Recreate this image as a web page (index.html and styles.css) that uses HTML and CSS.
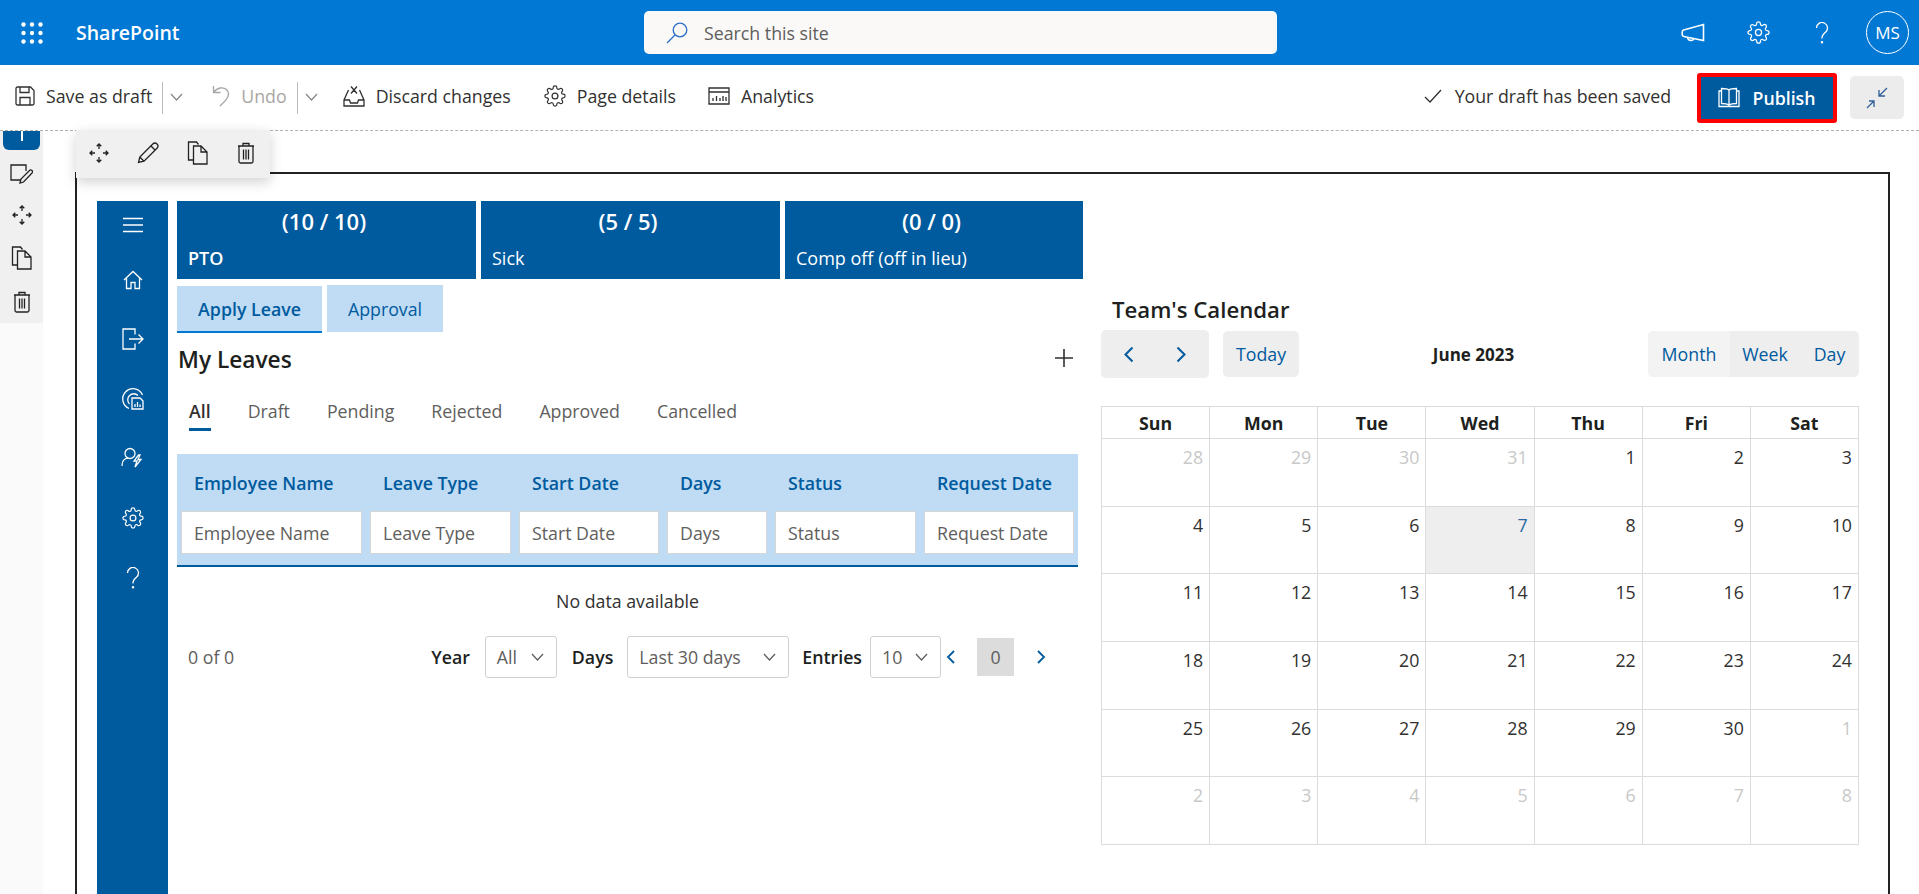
FILE: index.html
```html
<!DOCTYPE html>
<html lang="en">
<head>
    <meta charset="UTF-8">
    <title>SharePoint</title>
    <link rel="stylesheet" href="styles.css">
</head>
<body>
    <svg class="sprite" aria-hidden="true">
        <symbol id="i-gear" viewBox="0 0 24 24">
            <circle cx="12" cy="12" r="3.2"></circle>
            <path d="M19.4 15a1.65 1.65 0 0 0 .33 1.82l.06.06a2 2 0 0 1 0 2.83 2 2 0 0 1-2.83 0l-.06-.06a1.65 1.65 0 0 0-1.82-.33 1.65 1.65 0 0 0-1 1.51V21a2 2 0 0 1-2 2 2 2 0 0 1-2-2v-.09A1.65 1.65 0 0 0 9 19.4a1.65 1.65 0 0 0-1.82.33l-.06.06a2 2 0 0 1-2.83 0 2 2 0 0 1 0-2.83l.06-.06a1.65 1.65 0 0 0 .33-1.82 1.65 1.65 0 0 0-1.51-1H3a2 2 0 0 1-2-2 2 2 0 0 1 2-2h.09A1.65 1.65 0 0 0 4.6 9a1.65 1.65 0 0 0-.33-1.82l-.06-.06a2 2 0 0 1 0-2.83 2 2 0 0 1 2.83 0l.06.06a1.65 1.65 0 0 0 1.82.33H9a1.65 1.65 0 0 0 1-1.51V3a2 2 0 0 1 2-2 2 2 0 0 1 2 2v.09a1.65 1.65 0 0 0 1 1.51 1.65 1.65 0 0 0 1.82-.33l.06-.06a2 2 0 0 1 2.83 0 2 2 0 0 1 0 2.83l-.06.06a1.65 1.65 0 0 0-.33 1.82V9a1.65 1.65 0 0 0 1.51 1H21a2 2 0 0 1 2 2 2 2 0 0 1-2 2h-.09a1.65 1.65 0 0 0-1.51 1z"></path>
        </symbol>
        <symbol id="i-move" viewBox="0 0 20 20">
            <path d="M10 1v5M7.7 3.3 10 1l2.3 2.3M10 19v-5M7.7 16.700 10 19l2.300-2.300M1 10h5M3.300 7.700 1 10l2.300 2.300M19 10h-5M16.700 7.700 19 10l-2.300 2.300"></path>
        </symbol>
        <symbol id="i-pencil" viewBox="0 0 22 22">
            <path d="M1.500 20.500l1.300-5.500L15.800 2a2.400 2.400 0 0 1 4.200 4.200L7 19.200zM2.800 15l4.200 4.200M14 4l4 4"></path>
        </symbol>
        <symbol id="i-copy" viewBox="0 0 22 24">
            <path d="M6.500 19H1.500V1h8l2 2.500M6.500 5h7.500l6 6v12H6.500zM14 5v6h6"></path>
        </symbol>
        <symbol id="i-trash" viewBox="0 0 18 22">
            <path d="M1 4h16M6 4V1.500h6V4M2 4v15.500A1.500 1.500 0 0 0 3.500 21h11a1.500 1.500 0 0 0 1.500-1.500V4M6.500 7.500v10M9 7.500v10M11.500 7.500v10"></path>
        </symbol>
        <symbol id="i-question" viewBox="0 0 14 22">
            <path d="M1.500 6a5.500 5.500 0 1 1 9 4.200C8.500 12 7 13 7 15.500v1"></path>
            <circle cx="7" cy="20.300" r=".6"></circle>
        </symbol>
    </svg>

    <!-- suite bar -->
    <header class="suite-bar">
        <svg class="waffle" width="22" height="22" viewBox="0 0 22 22">
            <circle cx="2.500" cy="2.500" r="2.200"></circle><circle cx="11" cy="2.500" r="2.200"></circle><circle cx="19.500" cy="2.500" r="2.200"></circle>
            <circle cx="2.500" cy="11" r="2.200"></circle><circle cx="11" cy="11" r="2.200"></circle><circle cx="19.500" cy="11" r="2.200"></circle>
            <circle cx="2.500" cy="19.500" r="2.200"></circle><circle cx="11" cy="19.500" r="2.200"></circle><circle cx="19.500" cy="19.500" r="2.200"></circle>
        </svg>
        <span class="brand">SharePoint</span>
        <div class="search-box">
            <svg class="ic search-icon" width="22" height="22" viewBox="0 0 22 22">
                <circle cx="14" cy="8" r="6.800"></circle>
                <path d="M9 13 1 21"></path>
            </svg>
            <span>Search this site</span>
        </div>
        <div class="suite-actions">
            <svg class="ic megaphone" width="24" height="20" viewBox="0 0 24 20">
                <path d="M22.500 1.500v16L2.800 13.500A2 2 0 0 1 1.200 11.500V9a2 2 0 0 1 1.400-1.900zM6.500 14.500a3.500 3.500 0 0 0 6.500 1.200"></path>
            </svg>
            <svg class="ic" width="23" height="23"><use href="#i-gear"></use></svg>
            <svg class="ic help-icon" width="14" height="22"><use href="#i-question"></use></svg>
            <div class="avatar">MS</div>
        </div>
    </header>

    <!-- command bar -->
    <div class="command-bar">
        <button class="cmd">
            <svg class="ic" width="20" height="20" viewBox="0 0 20 20">
                <path d="M1 2.500A1.500 1.500 0 0 1 2.500 1h13L19 4.500v13a1.500 1.500 0 0 1-1.500 1.500h-15A1.500 1.500 0 0 1 1 17.500zM5 1v5.500h9V1M5 19v-7.500h10V19"></path>
            </svg>
            Save as draft
        </button>
        <span class="cmd-split"></span>
        <svg class="ic chev" width="13" height="8" viewBox="0 0 13 8"><path d="M1 1l5.500 6L12 1"></path></svg>

        <button class="cmd cmd-disabled cmd-undo">
            <svg class="ic" width="18" height="22" viewBox="0 0 18 22">
                <path d="M1.500 1v6.500h7M1.500 7.500C5 2.500 11 1.500 14.500 4.500c3.500 3.500 2.500 7-1 11L8 21"></path>
            </svg>
            Undo
        </button>
        <span class="cmd-split"></span>
        <svg class="ic chev" width="13" height="8" viewBox="0 0 13 8"><path d="M1 1l5.500 6L12 1"></path></svg>

        <button class="cmd cmd-discard">
            <svg class="ic" width="22" height="22" viewBox="0 0 22 22">
                <path d="M5.500 5 1 15v6h20v-6L16.500 5M1 15h5.500l1 3h7l1-3H21M8 1.500l6 7M14 1.500l-6 7"></path>
            </svg>
            Discard changes
        </button>
        <button class="cmd cmd-details">
            <svg class="ic" width="22" height="22"><use href="#i-gear"></use></svg>
            Page details
        </button>
        <button class="cmd cmd-analytics">
            <svg class="ic" width="22" height="18" viewBox="0 0 22 18">
                <path d="M1 1h20v16H1zM1 5h20M5 14v-3M8.500 14V9M12 14v-3M15 14V9M18 14v-4"></path>
            </svg>
            Analytics
        </button>

        <div class="save-state">
            <svg class="ic" width="18" height="14" viewBox="0 0 18 14"><path d="M1 8l5 5L17 1"></path></svg>
            Your draft has been saved
        </div>
        <button class="publish-btn">
            <svg class="ic" width="22" height="21" viewBox="0 0 22 21">
                <path d="M3.500 1.500c3 0 6 0 7.500 1.500v15c-1.500-1-4.500-1.500-7.500-1.500zM18.500 1.500c-3 0-6 0-7.500 1.500v15c1.500-1 4.500-1.500 7.500-1.500zM3.500 4H1v15.500h20V4h-2.500"></path>
            </svg>
            Publish
        </button>
        <button class="collapse-btn">
            <svg class="ic" width="22" height="22" viewBox="0 0 22 22">
                <path d="M21 1l-8 8M13 3v6h6M1 21l7-7M3 14h5v6"></path>
            </svg>
        </button>
    </div>

    <div class="workspace">
        <!-- left edit rail -->
        <aside class="rail">
            <div class="rail-tools">
                <div class="rail-add"></div>
                <svg class="ic" width="23" height="20" viewBox="0 0 23 20">
                    <path d="M11 16H1V1h15v6M10 19l1-4 8.500-8.500a1.700 1.700 0 0 1 2.500 2.500L13.500 18z"></path>
                </svg>
                <svg class="ic" width="20" height="20"><use href="#i-move"></use></svg>
                <svg class="ic" width="22" height="24"><use href="#i-copy"></use></svg>
                <svg class="ic" width="18" height="22"><use href="#i-trash"></use></svg>
            </div>
        </aside>

        <!-- floating webpart toolbar -->
        <div class="part-tools">
            <svg class="ic" width="20" height="20"><use href="#i-move"></use></svg>
            <svg class="ic" width="22" height="22"><use href="#i-pencil"></use></svg>
            <svg class="ic" width="22" height="24"><use href="#i-copy"></use></svg>
            <svg class="ic" width="18" height="22"><use href="#i-trash"></use></svg>
        </div>

        <section class="webpart">
            <nav class="side-nav">
                <svg class="ic" width="20" height="16" viewBox="0 0 20 16"><path d="M0 1.500h20M0 8h20M0 14.500h20"></path></svg>
                <svg class="ic" width="20" height="20" viewBox="0 0 20 20">
                    <path d="M1 10 10 1.500 19 10M3.500 8v10.500h4.500v-6h4v6h4.500V8"></path>
                </svg>
                <svg class="ic" width="22" height="22" viewBox="0 0 22 22">
                    <path d="M13 6.500V1H1v20h12v-5.500M7 11h14M16.500 6.500 21 11l-4.500 4.500"></path>
                </svg>
                <svg class="ic" width="23" height="23" viewBox="0 0 23 23">
                    <path d="M8 21.500A10.300 10.300 0 1 1 21.500 8M8.500 17A6 6 0 1 1 17 8.500"></path>
                    <path d="M11 11h8l3 3v8H11zM14 20v-3M16.500 20v-5M19 20v-2.500"></path>
                </svg>
                <svg class="ic" width="23" height="22" viewBox="0 0 23 22">
                    <circle cx="9" cy="6.500" r="5"></circle>
                    <path d="M1 19c0-4.500 2.500-7.500 6-7.800M17.500 8l-4.500 6h3l-2 6 6-7.500h-3l2-4.500z"></path>
                </svg>
                <svg class="ic" width="22" height="22"><use href="#i-gear"></use></svg>
                <svg class="ic" width="14" height="22"><use href="#i-question"></use></svg>
            </nav>

            <div class="leave-col">
                <div class="balance-cards">
                    <div class="balance-card">
                        <div class="balance-count">(10 / 10)</div>
                        <div class="balance-label balance-strong">PTO</div>
                    </div>
                    <div class="balance-card">
                        <div class="balance-count">(5 / 5)</div>
                        <div class="balance-label">Sick</div>
                    </div>
                    <div class="balance-card">
                        <div class="balance-count">(0 / 0)</div>
                        <div class="balance-label">Comp off (off in lieu)</div>
                    </div>
                </div>

                <div class="main-tabs">
                    <div class="main-tab main-tab-active">Apply Leave</div>
                    <div class="main-tab">Approval</div>
                </div>

                <div class="leaves-head">
                    <h2>My Leaves</h2>
                    <svg class="ic add-icon" width="18" height="18" viewBox="0 0 18 18"><path d="M9 0v18M0 9h18"></path></svg>
                </div>

                <div class="status-tabs">
                    <span class="status-tab status-tab-active">All</span>
                    <span class="status-tab">Draft</span>
                    <span class="status-tab">Pending</span>
                    <span class="status-tab">Rejected</span>
                    <span class="status-tab">Approved</span>
                    <span class="status-tab">Cancelled</span>
                </div>

                <div class="leave-table">
                    <div class="leave-th">Employee Name</div>
                    <div class="leave-th">Leave Type</div>
                    <div class="leave-th">Start Date</div>
                    <div class="leave-th">Days</div>
                    <div class="leave-th">Status</div>
                    <div class="leave-th">Request Date</div>
                    <input class="leave-filter" placeholder="Employee Name">
                    <input class="leave-filter" placeholder="Leave Type">
                    <input class="leave-filter" placeholder="Start Date">
                    <input class="leave-filter" placeholder="Days">
                    <input class="leave-filter" placeholder="Status">
                    <input class="leave-filter" placeholder="Request Date">
                </div>
                <div class="no-data">No data available</div>

                <div class="table-foot">
                    <span class="foot-count">0 of 0</span>
                    <div class="foot-controls">
                        <label>Year</label>
                        <div class="fake-select select-year">All<svg class="ic" width="13" height="8" viewBox="0 0 13 8"><path d="M1 1l5.500 6L12 1"></path></svg></div>
                        <label class="label-days">Days</label>
                        <div class="fake-select select-days">Last 30 days<svg class="ic" width="13" height="8" viewBox="0 0 13 8"><path d="M1 1l5.500 6L12 1"></path></svg></div>
                        <label class="label-entries">Entries</label>
                        <div class="fake-select select-entries">10<svg class="ic" width="13" height="8" viewBox="0 0 13 8"><path d="M1 1l5.500 6L12 1"></path></svg></div>
                        <svg class="ic pager-chev" width="9" height="14" viewBox="0 0 9 14"><path d="M8 1 2 7l6 6"></path></svg>
                        <span class="pager-box">0</span>
                        <svg class="ic pager-chev" width="9" height="14" viewBox="0 0 9 14"><path d="M1 1l6 6-6 6"></path></svg>
                    </div>
                </div>
            </div>

            <div class="calendar-col">
                <h2 class="cal-title">Team's Calendar</h2>
                <div class="cal-toolbar">
                    <div class="cal-left">
                        <div class="cal-nav">
                            <svg class="ic" width="11" height="17" viewBox="0 0 11 17"><path d="M9.500 1.500 2.500 8.500l7 7"></path></svg>
                            <svg class="ic" width="11" height="17" viewBox="0 0 11 17"><path d="M1.500 1.500l7 7-7 7"></path></svg>
                        </div>
                        <div class="cal-today">Today</div>
                    </div>
                    <div class="cal-month">June 2023</div>
                    <div class="cal-views">
                        <span class="cal-view cal-view-on">Month</span>
                        <span class="cal-view cal-view-week">Week</span>
                        <span class="cal-view cal-view-day">Day</span>
                    </div>
                </div>

                <div class="cal-grid">
                    <div class="cal-dow">Sun</div><div class="cal-dow">Mon</div><div class="cal-dow">Tue</div><div class="cal-dow">Wed</div><div class="cal-dow">Thu</div><div class="cal-dow">Fri</div><div class="cal-dow">Sat</div>
                    <div class="cal-day cal-off">28</div><div class="cal-day cal-off">29</div><div class="cal-day cal-off">30</div><div class="cal-day cal-off">31</div><div class="cal-day">1</div><div class="cal-day">2</div><div class="cal-day">3</div>
                    <div class="cal-day">4</div><div class="cal-day">5</div><div class="cal-day">6</div><div class="cal-day cal-now">7</div><div class="cal-day">8</div><div class="cal-day">9</div><div class="cal-day">10</div>
                    <div class="cal-day">11</div><div class="cal-day">12</div><div class="cal-day">13</div><div class="cal-day">14</div><div class="cal-day">15</div><div class="cal-day">16</div><div class="cal-day">17</div>
                    <div class="cal-day">18</div><div class="cal-day">19</div><div class="cal-day">20</div><div class="cal-day">21</div><div class="cal-day">22</div><div class="cal-day">23</div><div class="cal-day">24</div>
                    <div class="cal-day">25</div><div class="cal-day">26</div><div class="cal-day">27</div><div class="cal-day">28</div><div class="cal-day">29</div><div class="cal-day">30</div><div class="cal-day cal-off">1</div>
                    <div class="cal-day cal-off">2</div><div class="cal-day cal-off">3</div><div class="cal-day cal-off">4</div><div class="cal-day cal-off">5</div><div class="cal-day cal-off">6</div><div class="cal-day cal-off">7</div><div class="cal-day cal-off">8</div>
                </div>
            </div>
        </section>
    </div>
</body>
</html>
```
FILE: styles.css
```css
:root {
    --suite-blue: #0078d4;
    --theme-blue: #005a9e;
    --light-blue: #bfdcf4;
    --text-dark: #323130;
    --text-muted: #605e5c;
    --line: #dcdcdc;
}

*, *::before, *::after {
    box-sizing: border-box;
    margin: 0;
    padding: 0;
}

html, body {
    height: 894px;
    overflow: hidden;
}

body {
    font-family: "Open Sans", "Noto Sans", sans-serif;
    font-size: 17.75px;
    color: var(--text-dark);
    background: #fff;
    display: flex;
    flex-direction: column;
}

button {
    font: inherit;
    color: inherit;
    background: none;
    border: 0;
}

.sprite {
    display: none;
}

.ic {
    fill: none;
    stroke: currentColor;
    stroke-width: 1.3;
    flex-shrink: 0;
    display: block;
}

/* suite bar */
.suite-bar {
    height: 65px;
    flex-shrink: 0;
    background: var(--suite-blue);
    color: #fff;
    display: flex;
    align-items: center;
    position: relative;
    padding-left: 21px;
}

.waffle {
    fill: #fff;
    margin-right: 33px;
}

.brand {
    font-size: 19.5px;
    font-weight: 600;
    width: 568px;
}

.search-box {
    width: 633px;
    height: 43px;
    background: #faf9f8;
    border-radius: 5px;
    color: var(--text-muted);
    display: flex;
    align-items: center;
    gap: 16px;
    padding-left: 22px;
}

.search-icon {
    color: #2a6fc4;
}

.suite-actions {
    margin-left: auto;
    display: flex;
    align-items: center;
    padding-right: 10px;
    gap: 42px;
}

.megaphone {
    stroke-width: 1.6;
}

.help-icon {
    margin-left: 3px;
}

.avatar {
    width: 43px;
    height: 43px;
    border: 1px solid #fff;
    border-radius: 50%;
    display: flex;
    align-items: center;
    justify-content: center;
    font-size: 17px;
    margin-left: -5px;
}

/* command bar */
.command-bar {
    height: 66px;
    flex-shrink: 0;
    display: flex;
    align-items: center;
    padding: 0 15px;
    border-bottom: 1px dashed #b0b0b0;
}

.cmd {
    display: flex;
    align-items: center;
    gap: 11px;
    white-space: nowrap;
    margin-bottom: 4px;
}

.cmd-disabled {
    color: #a8a6a4;
}

.cmd-split {
    width: 1px;
    height: 32px;
    background: #bdbdbd;
    margin: 0 7px 0 10px;
}

.chev {
    color: #8a8886;
    margin-bottom: 2px;
}

.cmd-undo {
    margin-left: 29px;
}

.cmd-discard {
    margin-left: 25px;
}

.cmd-details {
    margin-left: 33px;
}

.cmd-analytics {
    margin-left: 32px;
}

.save-state {
    margin-left: auto;
    margin-bottom: 4px;
    display: flex;
    align-items: center;
    gap: 13px;
}

.publish-btn {
    margin-left: 26px;
    width: 140px;
    height: 50px;
    background: var(--theme-blue);
    border: 4px solid #f00;
    border-radius: 3px;
    color: #fff;
    font-weight: 600;
    display: flex;
    align-items: center;
    justify-content: center;
    gap: 12px;
}

.collapse-btn {
    margin-left: 13px;
    width: 54px;
    height: 43px;
    background: #ececec;
    border-radius: 5px;
    color: #2f5f96;
    display: flex;
    align-items: center;
    justify-content: center;
}

/* page area */
.workspace {
    flex: 1;
    display: flex;
    position: relative;
    min-height: 0;
}

.rail {
    width: 43px;
    flex-shrink: 0;
    background: #fafafa;
}

.rail-tools {
    height: 192px;
    background: #f0f0f0;
    color: #222;
    display: flex;
    flex-direction: column;
    align-items: center;
    gap: 21px;
}

.rail-add {
    width: 37px;
    height: 19px;
    margin-bottom: -7px;
    background: var(--theme-blue);
    border-radius: 0 0 6px 6px;
    position: relative;
}

.rail-add::after {
    content: '';
    position: absolute;
    left: 18px;
    top: 0;
    width: 2px;
    height: 10px;
    background: #fff;
}

.part-tools {
    position: absolute;
    left: 76px;
    top: -1px;
    width: 194px;
    height: 48px;
    background: #f0f0f0;
    box-shadow: 0 4px 12px rgba(0, 0, 0, 0.18);
    color: #222;
    display: flex;
    align-items: center;
    gap: 28px;
    padding: 0 0 3px 13px;
    z-index: 2;
}

.webpart {
    margin: 41px 29px 0 32px;
    flex: 1;
    min-width: 0;
    border: 2px solid #222;
    border-bottom: 0;
    padding: 27px 0 0 20px;
    display: flex;
}

.side-nav {
    width: 71px;
    flex-shrink: 0;
    background: var(--theme-blue);
    color: #fff;
    display: flex;
    flex-direction: column;
    align-items: center;
    gap: 38px;
    padding-top: 16px;
}

.side-nav .ic:nth-child(2) {
    margin-top: -1px;
}

.side-nav .ic:nth-child(4) {
    margin-top: -1px;
}

.side-nav .ic:nth-child(5) {
    margin-top: -1px;
}

.leave-col {
    width: 906px;
    margin-left: 9px;
    flex-shrink: 0;
}

.balance-cards {
    display: grid;
    grid-template-columns: 299px 299px 298px;
    gap: 5px;
}

.balance-card {
    height: 78px;
    background: var(--theme-blue);
    color: #fff;
    padding-top: 4px;
}

.balance-count {
    font-size: 22px;
    font-weight: 600;
    text-align: center;
    padding-right: 5px;
    line-height: 32px;
}

.balance-label {
    padding-left: 11px;
    margin-top: 10px;
    font-size: 18px;
    line-height: 22px;
}

.balance-strong {
    font-weight: 600;
}

.main-tabs {
    display: flex;
    gap: 5px;
    margin-top: 6px;
    align-items: flex-start;
}

.main-tab {
    width: 116px;
    height: 47px;
    background: var(--light-blue);
    color: var(--theme-blue);
    display: flex;
    align-items: center;
    justify-content: center;
}

.main-tab-active {
    width: 145px;
    margin-top: 1px;
    font-weight: 600;
    border-bottom: 2px solid #0078d4;
}

.leaves-head {
    display: flex;
    align-items: center;
    justify-content: space-between;
    height: 54px;
    padding: 0 10px 2px 1px;
}

.leaves-head h2 {
    font-size: 22.7px;
    font-weight: 600;
    color: #201f1e;
}

.add-icon {
    stroke-width: 1.6;
    margin-bottom: 3px;
}

.status-tabs {
    display: flex;
    gap: 37px;
    padding-left: 12px;
    height: 67px;
    line-height: 48px;
}

.status-tab {
    height: 44px;
    color: var(--text-muted);
}

.status-tab-active {
    color: var(--text-dark);
    font-weight: 600;
    border-bottom: 3px solid var(--theme-blue);
}

.leave-table {
    width: 901px;
    height: 113px;
    background: var(--light-blue);
    border-bottom: 2px solid var(--theme-blue);
    padding: 0 4px;
    display: grid;
    grid-template-columns: 181px 141px 140px 100px 141px 150px;
    grid-template-rows: 57px 43px;
    column-gap: 8px;
}

.leave-th {
    color: var(--theme-blue);
    font-weight: 600;
    display: flex;
    align-items: center;
    padding-left: 13px;
}

.leave-filter {
    font: inherit;
    width: 100%;
    height: 43px;
    border: 1px solid #d6d6d6;
    background: #fff;
    padding-left: 12px;
    outline: none;
}

.leave-filter::placeholder {
    color: var(--text-muted);
    opacity: 1;
}

.no-data {
    width: 901px;
    height: 69px;
    text-align: center;
    line-height: 68px;
}

.table-foot {
    width: 901px;
    height: 42px;
    display: flex;
    align-items: center;
    justify-content: space-between;
    padding: 0 32px 0 11px;
}

.foot-count {
    color: var(--text-muted);
}

.foot-controls {
    display: flex;
    align-items: center;
}

.foot-controls label {
    font-weight: 600;
    color: #201f1e;
}

.fake-select {
    height: 42px;
    border: 1px solid #d0d0d0;
    border-radius: 3px;
    color: var(--text-muted);
    display: flex;
    align-items: center;
    justify-content: space-between;
    padding: 0 12px 0 11px;
}

.select-year {
    width: 72px;
    margin-left: 15px;
}

.select-days {
    width: 162px;
    margin-left: 14px;
}

.select-entries {
    width: 71px;
    margin-left: 8px;
}

.label-days {
    margin-left: 15px;
}

.label-entries {
    margin-left: 13px;
}

.pager-chev {
    color: var(--theme-blue);
    stroke-width: 1.8;
}

.select-entries + .pager-chev {
    margin-left: 5px;
}

.pager-box {
    width: 37px;
    height: 38px;
    margin: 0 23px 0 22px;
    background: #dcdcdc;
    color: var(--text-muted);
    display: flex;
    align-items: center;
    justify-content: center;
}

/* calendar */
.calendar-col {
    width: 758px;
    margin-left: 18px;
    flex-shrink: 0;
}

.cal-title {
    font-size: 22.2px;
    font-weight: 600;
    line-height: 28px;
    color: #201f1e;
    margin: 95px 0 6px 11px;
}

.cal-toolbar {
    display: flex;
    align-items: center;
    justify-content: space-between;
    margin-bottom: 28px;
}

.cal-left {
    display: flex;
    align-items: center;
    gap: 14px;
}

.cal-nav {
    width: 108px;
    height: 48px;
    background: #eee;
    border-radius: 5px;
    color: var(--theme-blue);
    display: flex;
    align-items: center;
    justify-content: center;
    gap: 42px;
}

.cal-nav .ic {
    stroke-width: 2;
}

.cal-today {
    width: 76px;
    height: 46px;
    background: #eee;
    border-radius: 5px;
    color: var(--theme-blue);
    display: flex;
    align-items: center;
    justify-content: center;
}

.cal-month {
    font-weight: 700;
    color: #201f1e;
    font-size: 17px;
}

.cal-views {
    width: 211px;
    height: 46px;
    background: #eee;
    border-radius: 5px;
    overflow: hidden;
    display: flex;
    color: var(--theme-blue);
}

.cal-view {
    display: flex;
    align-items: center;
    justify-content: center;
}

.cal-view-on {
    width: 82px;
    background: #f3f3f3;
}

.cal-view-week {
    width: 70px;
}

.cal-view-day {
    flex: 1;
}

.cal-grid {
    height: 439px;
    display: grid;
    grid-template-columns: repeat(7, 1fr);
    grid-template-rows: 32px repeat(6, 1fr);
    border-top: 1px solid var(--line);
    border-left: 1px solid var(--line);
}

.cal-dow {
    border-right: 1px solid var(--line);
    border-bottom: 1px solid var(--line);
    font-weight: 700;
    color: #201f1e;
    text-align: center;
    line-height: 33px;
}

.cal-day {
    border-right: 1px solid var(--line);
    border-bottom: 1px solid var(--line);
    text-align: right;
    padding: 6px 6px 0 0;
    line-height: 24px;
}

.cal-off {
    color: #c8c8c8;
}

.cal-now {
    background: #eee;
    color: #2b6aa5;
}
```
